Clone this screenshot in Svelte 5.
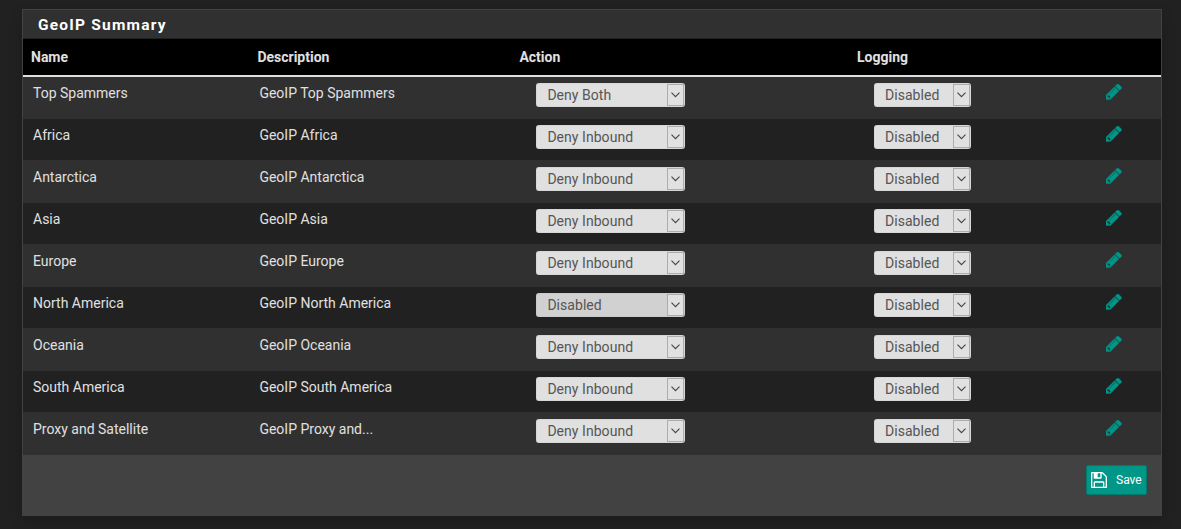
<script>
  const rows = [
    ['Top Spammers', 'GeoIP Top Spammers', 'Deny Both'],
    ['Africa', 'GeoIP Africa', 'Deny Inbound'],
    ['Antarctica', 'GeoIP Antarctica', 'Deny Inbound'],
    ['Asia', 'GeoIP Asia', 'Deny Inbound'],
    ['Europe', 'GeoIP Europe', 'Deny Inbound'],
    ['North America', 'GeoIP North America', 'Disabled'],
    ['Oceania', 'GeoIP Oceania', 'Deny Inbound'],
    ['South America', 'GeoIP South America', 'Deny Inbound'],
    ['Proxy and Satellite', 'GeoIP Proxy and...', 'Deny Inbound']
  ];
</script>

{#snippet picker(value, kind)}
  <button class="select {kind}" class:off={kind === 'action' && value === 'Disabled'}>
    <span>{value}</span>
    <i class="arrow">
      <svg width="9" height="6" viewBox="0 0 9 6"><path d="M.5 .7l4 4 4-4" /></svg>
    </i>
  </button>
{/snippet}

<main>
  <section class="panel">
    <h2>GeoIP Summary</h2>
    <div class="grid head">
      <span>Name</span><span>Description</span><span>Action</span><span>Logging</span>
    </div>
    {#each rows as [name, description, action]}
      <div class="grid row">
        <span class="text">{name}</span>
        <span class="text">{description}</span>
        <div class="cell">{@render picker(action, 'action')}</div>
        <div class="cell">{@render picker('Disabled', 'logging')}</div>
        <svg class="pencil" viewBox="0 149 1515 1515" aria-label="Edit">
          <path d="M363 1536l91-91-235-235-91 91v107h128v128h107zm523-928q0-22-22-22-10 0-17 7l-542 542q-7 7-7 17 0 22 22 22 10 0 17-7l542-542q7-7 7-17zm-54-192l416 416-832 832h-416v-416zm683 96q0 53-37 90l-166 166-416-416 166-165q36-38 90-38 53 0 91 38l235 234q37 39 37 91z" />
        </svg>
      </div>
    {/each}
    <footer>
      <button class="save">
        <svg viewBox="0 128 1536 1536">
          <path d="M384 1536h768v-384h-768v384zm896 0h128v-896q0-14-10-38.500t-20-34.500l-281-281q-10-10-34-20t-39-10v416q0 40-28 68t-68 28h-576q-40 0-68-28t-28-68v-416h-128v1280h128v-416q0-40 28-68t68-28h832q40 0 68 28t28 68v416zm-384-928v-320q0-13-9.500-22.500t-22.500-9.500h-192q-13 0-22.500 9.500t-9.500 22.500v320q0 13 9.500 22.500t22.500 9.500h192q13 0 22.500-9.500t9.500-22.500zm640 32v928q0 40-28 68t-68 28h-1344q-40 0-68-28t-28-68v-1344q0-40 28-68t68-28h928q40 0 88 20t76 48l280 280q28 28 48 76t20 88z" />
        </svg>
        <span>Save</span>
      </button>
    </footer>
  </section>
</main>

<style>
  :global(body) {
    background: #212121;
  }
  main {
    box-sizing: border-box;
    height: 529px;
    padding: 9px 19px 13px 22px;
    overflow: hidden;
    font-family: Roboto, sans-serif;
    font-size: 14px;
    color: #e0e0e0;
  }
  .panel {
    box-sizing: border-box;
    height: 507px;
    border: 1px solid #424242;
    background: #424242;
    box-shadow: 0 6px 12px rgba(0, 0, 0, 0.18);
  }
  h2 {
    box-sizing: border-box;
    height: 29px;
    margin: 0;
    padding-left: 15px;
    border-bottom: 1px solid #212121;
    background: #303030;
    color: #fff;
    font-size: 15.5px;
    font-weight: 700;
    line-height: 30px;
    letter-spacing: 1.2px;
  }
  .grid {
    display: grid;
    grid-template-columns: 226.4px 262px 337.600px 249px 1fr;
    box-sizing: border-box;
    padding-left: 8px;
  }
  .head {
    height: 38px;
    border-bottom: 2px solid #e0e0e0;
    background: #000;
    font-weight: 700;
    line-height: 37px;
  }
  .row {
    height: 42px;
    border-bottom: 1px solid #303030;
    background: #212121;
  }
  .row:nth-child(odd) {
    background: #303030;
  }
  .text {
    padding-left: 2px;
    line-height: 33px;
  }
  .cell {
    padding: 6px 0 0 17px;
  }
  .cell:nth-child(3) {
    padding-left: 16.6px;
  }
  .select {
    display: flex;
    justify-content: space-between;
    box-sizing: border-box;
    height: 24px;
    padding: 1px 1px 1px 11px;
    border: 0;
    border-radius: 3px;
    background: #e0e0e0;
    box-shadow: inset 0 0 1px #888;
    color: #555;
    font: 14px/23px Roboto, sans-serif;
    letter-spacing: 0.05px;
  }
  .action {
    width: 149px;
    padding-left: 11.4px;
  }
  .logging {
    width: 97px;
  }
  .off {
    background: #d1d1d1;
  }
  .arrow {
    display: flex;
    align-items: center;
    justify-content: center;
    box-sizing: border-box;
    width: 17px;
    height: 22px;
    border: 1px solid #adadad;
    background: #e1e1e1;
  }
  .arrow svg {
    margin-right: 0.5px;
  }
  .arrow path {
    fill: none;
    stroke: #444;
    stroke-width: 1.1;
  }
  .pencil {
    width: 15.6px;
    height: 15.6px;
    margin-top: 7px;
    fill: #009688;
    stroke: #009688;
    stroke-width: 40;
  }
  footer {
    display: flex;
    justify-content: flex-end;
    padding: 10px 14px 0 0;
  }
  .save {
    display: flex;
    align-items: center;
    box-sizing: border-box;
    width: 61px;
    height: 30px;
    padding: 0 4px;
    border: 1px solid #00796b;
    border-radius: 2px;
    background: #009688;
    color: #fff;
    font: 12px Roboto, sans-serif;
  }
  .save svg {
    width: 16px;
    height: 16px;
    margin-right: 9px;
    fill: #fff;
  }
</style>
